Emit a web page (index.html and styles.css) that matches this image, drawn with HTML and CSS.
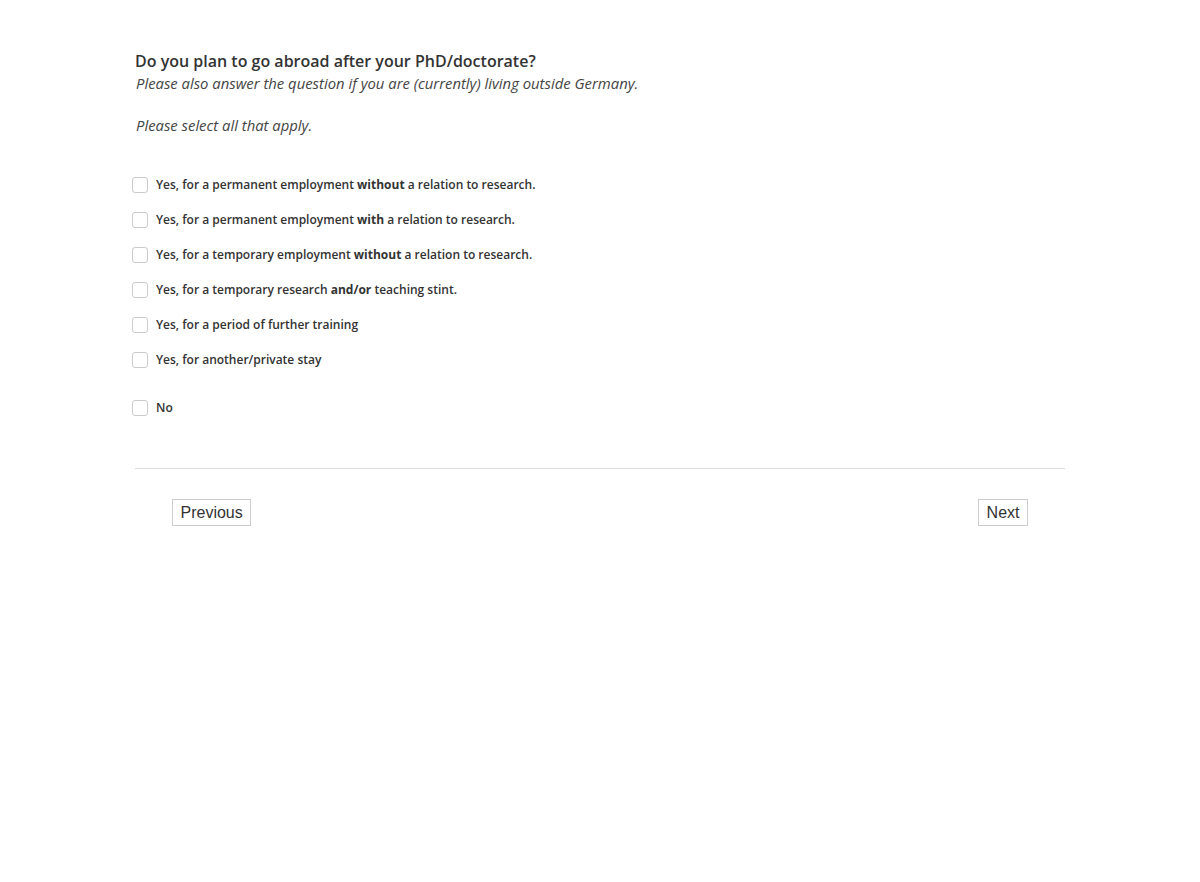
FILE: index.html
```html
<!DOCTYPE html>
<html>
<head>
<meta charset="utf-8">
<link rel="stylesheet" href="styles.css">
</head>
<body>
<div class="page">
  <div class="question">
    <h2 class="q-title">Do you plan to go abroad after your PhD/doctorate?</h2>
    <p class="q-help">Please also answer the question if you are (currently) living outside Germany.</p>
    <p class="q-help q-help-gap">Please select all that apply.</p>
  </div>
  <ul class="options">
    <li class="option"><span class="box"></span><span class="label">Yes, for a permanent employment <b>without</b> a relation to research.</span></li>
    <li class="option"><span class="box"></span><span class="label">Yes, for a permanent employment <b>with</b> a relation to research.</span></li>
    <li class="option"><span class="box"></span><span class="label">Yes, for a temporary employment <b>without</b> a relation to research.</span></li>
    <li class="option"><span class="box"></span><span class="label">Yes, for a temporary research <b>and/or</b> teaching stint.</span></li>
    <li class="option"><span class="box"></span><span class="label">Yes, for a period of further training</span></li>
    <li class="option"><span class="box"></span><span class="label">Yes, for another/private stay</span></li>
    <li class="option option-no"><span class="box"></span><span class="label">No</span></li>
  </ul>
  <hr class="divider">
  <div class="nav">
    <button class="btn">Previous</button>
    <button class="btn">Next</button>
  </div>
</div>
</body>
</html>
```

FILE: styles.css
```css
html, body {
  margin: 0;
  padding: 0;
  background: #fff;
}
body {
  font-family: "Open Sans", "Liberation Sans", sans-serif;
  color: #333;
}
.page {
  width: 930px;
  margin: 0 auto;
  padding-top: 50px;
}
.q-title {
  margin: 0;
  font-size: 16px;
  font-weight: 600;
  line-height: 22px;
  color: #333;
}
.q-help {
  margin: 0 0 0 1px;
  font-size: 14.85px;
  font-style: italic;
  line-height: 23px;
  color: #444;
}
.q-help-gap {
  margin-top: 19px;
}
.options {
  list-style: none;
  margin: 30px 0 0 -3px;
  padding: 0;
}
.option {
  display: flex;
  align-items: center;
  gap: 8px;
  height: 35px;
}
.option-no {
  margin-top: 13px;
}
.box {
  width: 14px;
  height: 14px;
  border: 1px solid #ccc;
  border-radius: 3px;
  background: #fff;
  flex: none;
}
.label {
  font-size: 12px;
  font-weight: 600;
  color: #333;
}
.label b {
  font-weight: 700;
}
.divider {
  border: 0;
  border-top: 1px solid #ddd;
  margin: 43px 0 0;
}
.nav {
  display: flex;
  justify-content: space-between;
  padding: 30px 37px 0;
}
.btn {
  font-family: "Liberation Sans", Arial, sans-serif;
  font-size: 16px;
  color: #333;
  background: #fff;
  border: 1px solid #ccc;
  border-radius: 0;
  padding: 3px 7.5px;
  height: 27px;
  line-height: 19px;
}
```
